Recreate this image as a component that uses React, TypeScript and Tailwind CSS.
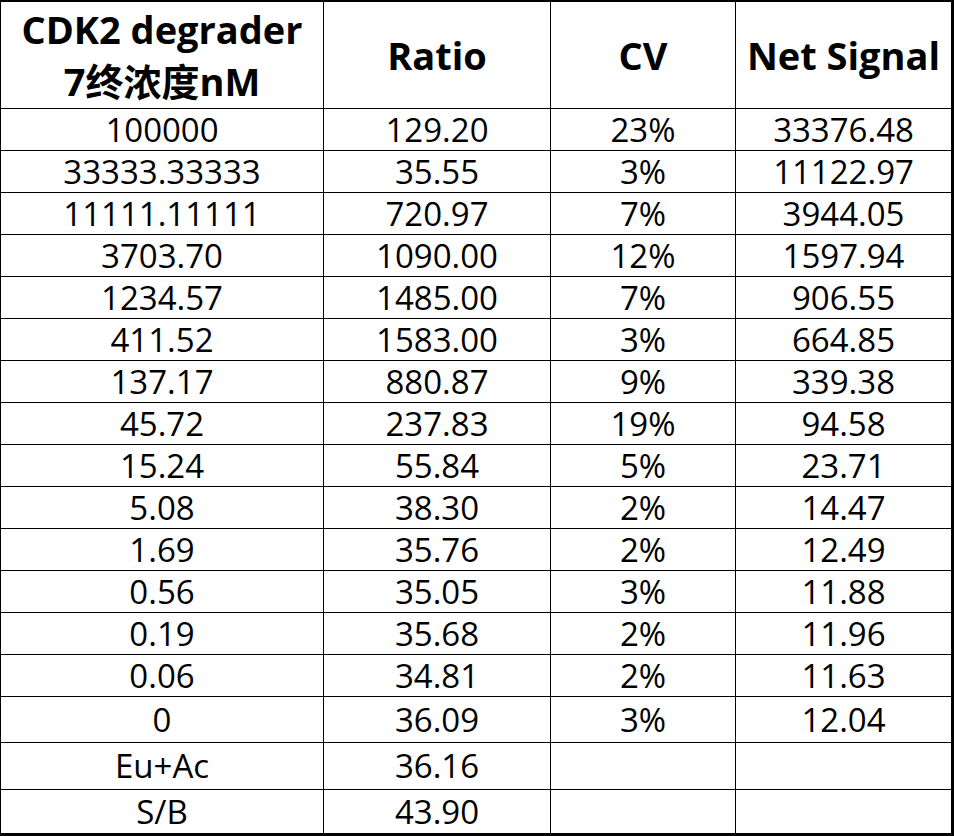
const rows: [string, string, string, string][] = [
  ["100000", "129.20", "23%", "33376.48"],
  ["33333.33333", "35.55", "3%", "11122.97"],
  ["11111.11111", "720.97", "7%", "3944.05"],
  ["3703.70", "1090.00", "12%", "1597.94"],
  ["1234.57", "1485.00", "7%", "906.55"],
  ["411.52", "1583.00", "3%", "664.85"],
  ["137.17", "880.87", "9%", "339.38"],
  ["45.72", "237.83", "19%", "94.58"],
  ["15.24", "55.84", "5%", "23.71"],
  ["5.08", "38.30", "2%", "14.47"],
  ["1.69", "35.76", "2%", "12.49"],
  ["0.56", "35.05", "3%", "11.88"],
  ["0.19", "35.68", "2%", "11.96"],
  ["0.06", "34.81", "2%", "11.63"],
  ["0", "36.09", "3%", "12.04"],
  ["Eu+Ac", "36.16", "", ""],
  ["S/B", "43.90", "", ""],
];

// row heights read off the screenshot (the last three rows are a bit taller)
const rowHeight = (i: number) => {
  if (i === 14) return "h-[46px]";
  if (i === 15) return "h-[47px]";
  if (i === 16) return "h-[43px]";
  return "h-[42px]";
};

const cols = ["w-[323px] border-r", "w-[227px] border-r", "w-[185px] border-r", "w-[215px]"];

export default function App() {
  return (
    <div className="bg-white w-[954px] h-[836px] text-black font-['Open_Sans','Noto_Sans_CJK_SC',sans-serif]">
      <div className="w-[954px] border-t-2 border-l border-r-[3px] border-b-[3px] border-black">
        <div className="flex h-[107px] border-b border-black text-[38px] font-bold leading-[52px]">
          <div className={`${cols[0]} border-black flex flex-col items-center justify-center`}>
            <span>CDK2 degrader</span>
            <span>7终浓度nM</span>
          </div>
          <div className={`${cols[1]} border-black flex items-center justify-center`}>Ratio</div>
          <div className={`${cols[2]} border-black flex items-center justify-center`}>CV</div>
          <div className={`${cols[3]} flex items-center justify-center`}>Net Signal</div>
        </div>
        {rows.map((r, i) => (
          <div
            key={i}
            className={`flex ${rowHeight(i)} ${i < rows.length - 1 ? "border-b" : ""} border-black text-[33px]`}
          >
            {r.map((v, j) => (
              <div key={j} className={`${cols[j]} border-black flex items-center justify-center`}>
                {v}
              </div>
            ))}
          </div>
        ))}
      </div>
    </div>
  );
}
